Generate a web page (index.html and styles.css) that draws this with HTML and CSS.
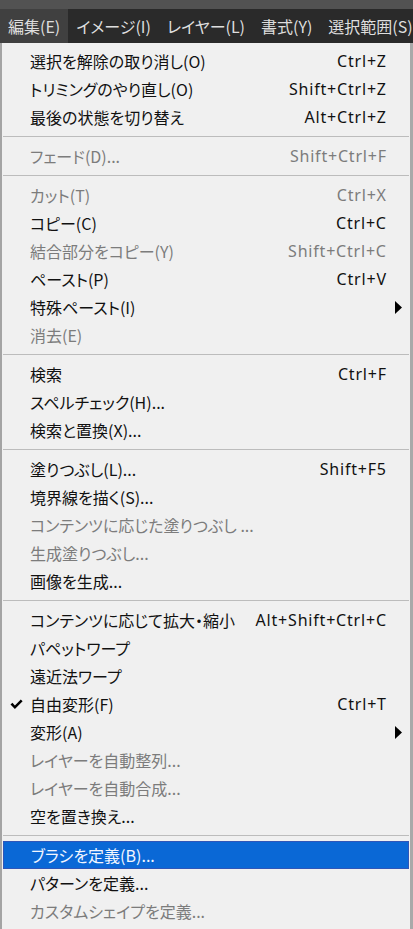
FILE: index.html
```html
<!DOCTYPE html>
<html lang="ja">
<head>
<meta charset="utf-8">
<title>編集メニュー</title>
<link rel="stylesheet" href="styles.css">
</head>
<body>
<div class="topband"></div>
<nav class="menubar">
  <span class="mb-item active">編集(E)</span>
  <span class="mb-item">イメージ(I)</span>
  <span class="mb-item">レイヤー(L)</span>
  <span class="mb-item">書式(Y)</span>
  <span class="mb-item">選択範囲(S)</span>
</nav>
<div class="menu">
  <div class="item"><span class="check"></span><span class="label">選択を解除の取り消し(O)</span><span class="sc">Ctrl+Z</span><span class="sub"></span></div>
  <div class="item"><span class="check"></span><span class="label">トリミングのやり直し(O)</span><span class="sc">Shift+Ctrl+Z</span><span class="sub"></span></div>
  <div class="item"><span class="check"></span><span class="label">最後の状態を切り替え</span><span class="sc">Alt+Ctrl+Z</span><span class="sub"></span></div>
  <div class="sep"></div>
  <div class="item disabled"><span class="check"></span><span class="label">フェード(D)...</span><span class="sc">Shift+Ctrl+F</span><span class="sub"></span></div>
  <div class="sep"></div>
  <div class="item disabled"><span class="check"></span><span class="label">カット(T)</span><span class="sc">Ctrl+X</span><span class="sub"></span></div>
  <div class="item"><span class="check"></span><span class="label">コピー(C)</span><span class="sc">Ctrl+C</span><span class="sub"></span></div>
  <div class="item disabled"><span class="check"></span><span class="label">結合部分をコピー(Y)</span><span class="sc">Shift+Ctrl+C</span><span class="sub"></span></div>
  <div class="item"><span class="check"></span><span class="label">ペースト(P)</span><span class="sc">Ctrl+V</span><span class="sub"></span></div>
  <div class="item"><span class="check"></span><span class="label">特殊ペースト(I)</span><span class="sc"></span><span class="sub"><svg width="7" height="13" viewBox="0 0 7 13"><path d="M0 0L7 6.5L0 13Z" fill="#000"/></svg></span></div>
  <div class="item disabled"><span class="check"></span><span class="label">消去(E)</span><span class="sc"></span><span class="sub"></span></div>
  <div class="sep"></div>
  <div class="item"><span class="check"></span><span class="label">検索</span><span class="sc">Ctrl+F</span><span class="sub"></span></div>
  <div class="item"><span class="check"></span><span class="label">スペルチェック(H)...</span><span class="sc"></span><span class="sub"></span></div>
  <div class="item"><span class="check"></span><span class="label">検索と置換(X)...</span><span class="sc"></span><span class="sub"></span></div>
  <div class="sep"></div>
  <div class="item"><span class="check"></span><span class="label">塗りつぶし(L)...</span><span class="sc">Shift+F5</span><span class="sub"></span></div>
  <div class="item"><span class="check"></span><span class="label">境界線を描く(S)...</span><span class="sc"></span><span class="sub"></span></div>
  <div class="item disabled"><span class="check"></span><span class="label">コンテンツに応じた塗りつぶし ...</span><span class="sc"></span><span class="sub"></span></div>
  <div class="item disabled"><span class="check"></span><span class="label">生成塗りつぶし...</span><span class="sc"></span><span class="sub"></span></div>
  <div class="item"><span class="check"></span><span class="label">画像を生成...</span><span class="sc"></span><span class="sub"></span></div>
  <div class="sep"></div>
  <div class="item"><span class="check"></span><span class="label">コンテンツに応じて拡大・縮小</span><span class="sc">Alt+Shift+Ctrl+C</span><span class="sub"></span></div>
  <div class="item"><span class="check"></span><span class="label">パペットワープ</span><span class="sc"></span><span class="sub"></span></div>
  <div class="item"><span class="check"></span><span class="label">遠近法ワープ</span><span class="sc"></span><span class="sub"></span></div>
  <div class="item"><span class="check"><svg width="13" height="11" viewBox="0 0 13 11"><path d="M0.5 5.6L2.4 3.8L4.9 6.4L10.8 0.4L12.6 2.2L4.9 10Z" fill="#000"/></svg></span><span class="label">自由変形(F)</span><span class="sc">Ctrl+T</span><span class="sub"></span></div>
  <div class="item"><span class="check"></span><span class="label">変形(A)</span><span class="sc"></span><span class="sub"><svg width="7" height="13" viewBox="0 0 7 13"><path d="M0 0L7 6.5L0 13Z" fill="#000"/></svg></span></div>
  <div class="item disabled"><span class="check"></span><span class="label">レイヤーを自動整列...</span><span class="sc"></span><span class="sub"></span></div>
  <div class="item disabled"><span class="check"></span><span class="label">レイヤーを自動合成...</span><span class="sc"></span><span class="sub"></span></div>
  <div class="item"><span class="check"></span><span class="label">空を置き換え...</span><span class="sc"></span><span class="sub"></span></div>
  <div class="sep"></div>
  <div class="item selected"><span class="check"></span><span class="label">ブラシを定義(B)...</span><span class="sc"></span><span class="sub"></span></div>
  <div class="item"><span class="check"></span><span class="label">パターンを定義...</span><span class="sc"></span><span class="sub"></span></div>
  <div class="item disabled"><span class="check"></span><span class="label">カスタムシェイプを定義...</span><span class="sc"></span><span class="sub"></span></div>
</div>
</body>
</html>
```

FILE: styles.css
```css
html, body {
  margin: 0;
  padding: 0;
}
body {
  width: 413px;
  height: 929px;
  overflow: hidden;
  background: #f0f0f0;
  font-family: "Noto Sans CJK JP", "Noto Sans", sans-serif;
  font-feature-settings: "palt";
  font-size: 16px;
}
.topband {
  height: 9px;
  background: #525252;
}
.menubar {
  height: 34px;
  background: #2a2a2a;
  display: flex;
  align-items: stretch;
  white-space: nowrap;
  overflow: hidden;
}
.mb-item {
  display: flex;
  align-items: center;
  padding: 0 8px;
  color: #dedede;
  font-size: 16px;
  line-height: 1;
}
.mb-item.active {
  background: #404040;
}
.menu {
  height: 886px;
  box-sizing: border-box;
  padding-top: 4px;
  border-left: 2px solid #a4a4a4;
  border-right: 3px solid #a9a9a9;
  background: #f0f0f0;
}
.item {
  height: 28px;
  margin: 0 1px;
  display: grid;
  grid-template-columns: 27px 1fr auto 23px;
  align-items: center;
  color: #111;
  box-sizing: border-box;
}
.item .label {
  white-space: nowrap;
  line-height: 1;
  padding-bottom: 1px;
}
.item .sc {
  font-family: "Noto Sans", sans-serif;
  font-feature-settings: normal;
  font-size: 16px;
  letter-spacing: 0.8px;
  line-height: 1;
  white-space: nowrap;
  padding-bottom: 1px;
  margin-right: -0.8px;
}
.item .check {
  display: flex;
  align-items: center;
  padding-left: 7px;
}
.item .sub {
  display: flex;
  align-items: center;
  padding-left: 9px;
}
.item.disabled {
  color: #7c7c7c;
}
.item.selected {
  background: #0a68d6;
  color: #f2f6ff;
  border: 1px solid #2f56b8;
}
.sep {
  height: 11px;
  box-sizing: border-box;
  padding-top: 5px;
  margin: 0 1px;
}
.sep::before {
  content: "";
  display: block;
  height: 1px;
  background: #bcbcbc;
}
```
